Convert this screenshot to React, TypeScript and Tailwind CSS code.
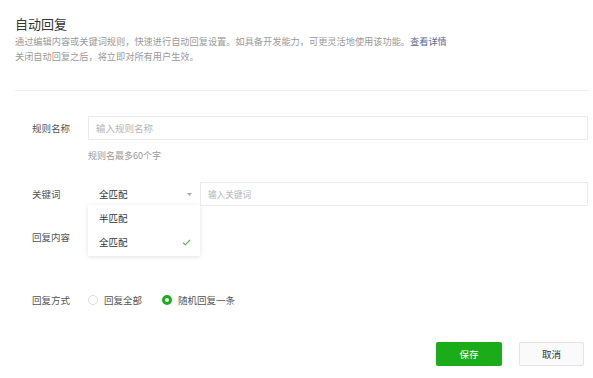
export default function App() {
  const font = { fontFamily: '"Noto Sans CJK SC", "Noto Sans", sans-serif' };

  return (
    <div className="w-[593px] h-[378px] bg-white overflow-hidden text-[#353535]" style={font}>
      <div className="pl-[15px] pr-[5px]">
        {/* Header */}
        <div className="pt-[15px]">
          <h1 className="text-[13px] leading-[18px] text-[#353535]">自动回复</h1>
          <p className="mt-[1px] text-[9.2px] leading-[15px] text-[#9a9a9a] whitespace-nowrap">
            通过编辑内容或关键词规则，快速进行自动回复设置。如具备开发能力，可更灵活地使用该功能。
            <span className="text-[#576b95]">查看详情</span>
          </p>
          <p className="text-[9.2px] leading-[15px] text-[#9a9a9a]">
            关闭自动回复之后，将立即对所有用户生效。
          </p>
        </div>

        <div className="mt-[26px] border-t border-[#ececec]" />

        {/* Form */}
        <div className="pl-[17px] pt-[25px] text-[9.5px]">
          {/* 规则名称 */}
          <div className="flex items-center">
            <div className="w-[56px] text-[#555]">规则名称</div>
            <div className="flex-1 h-[24px] border border-[#ebebeb] flex items-center pl-[7px] text-[#b5b5b5]">
              输入规则名称
            </div>
          </div>
          <div className="pl-[56px] mt-[8px] text-[9px] leading-[15px] text-[#9a9a9a]">
            规则名最多60个字
          </div>

          {/* 关键词 */}
          <div className="flex items-center mt-[19px]">
            <div className="w-[56px] text-[#555]">关键词</div>
            <div className="relative w-[112px] h-[24px] flex items-center justify-between pl-[11px] pr-[8px] text-[#353535]">
              <span>全匹配</span>
              <svg width="5" height="3" viewBox="0 0 5 3" className="text-[#aaa]">
                <path d="M0 0h5L2.5 3z" fill="currentColor" />
              </svg>
              <div className="absolute left-0 top-[23px] w-[112px] h-[51px] bg-white shadow-[0_1px_5px_rgba(0,0,0,0.12)] z-10 flex flex-col justify-center">
                <div className="h-[24px] flex items-center pl-[11px]">半匹配</div>
                <div className="h-[24px] flex items-center justify-between pl-[11px] pr-[9px]">
                  <span>全匹配</span>
                  <svg width="9" height="7" viewBox="0 0 9 7" fill="none">
                    <path d="M1 3.6l2.3 2.2L8 1" stroke="#4fb24f" strokeWidth="1.1" />
                  </svg>
                </div>
              </div>
            </div>
            <div className="flex-1 h-[24px] border border-[#ebebeb] flex items-center pl-[7px] text-[#b5b5b5] text-[8.6px]">
              输入关键词
            </div>
          </div>

          {/* 回复内容 */}
          <div className="flex items-center mt-[24px] h-[15px]">
            <div className="w-[56px] text-[#555]">回复内容</div>
          </div>

          {/* 回复方式 */}
          <div className="flex items-center mt-[48px]">
            <div className="w-[56px] text-[#555]">回复方式</div>
            <div className="flex items-center gap-[6px]">
              <span className="w-[10px] h-[10px] rounded-full border border-[#dcdcdc]" />
              <span className="text-[#555]">回复全部</span>
            </div>
            <div className="flex items-center gap-[6px] ml-[20px]">
              <span className="w-[10px] h-[10px] rounded-full border-[3px] border-[#1aad19]" />
              <span className="text-[#555]">随机回复一条</span>
            </div>
          </div>
        </div>

        {/* Buttons */}
        <div className="flex justify-end gap-[17px] mt-[35px] pr-[4px] text-[9.5px]">
          <button className="w-[66px] h-[24px] rounded-[2px] bg-[#1aad19] text-white">保存</button>
          <button className="w-[65px] h-[24px] rounded-[2px] bg-[#fafafa] border border-[#e5e5e5] text-[#353535]">
            取消
          </button>
        </div>
      </div>
    </div>
  );
}
